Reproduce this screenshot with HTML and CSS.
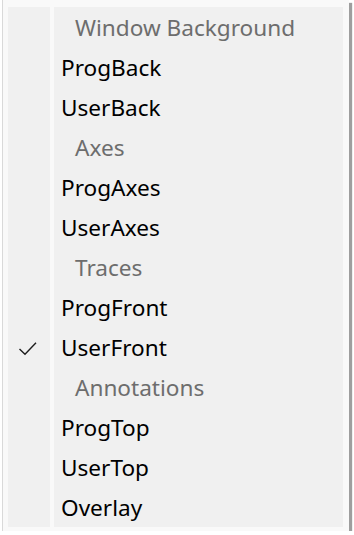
FILE: index.html
```html
<!DOCTYPE html>
<html lang="en">
<head>
  <meta charset="UTF-8">
  <meta name="viewport" content="width=device-width, initial-scale=1.0">
  <title>Layer menu</title>
  <link rel="stylesheet" href="styles.css">
</head>
<body>
  <div id="menu">
    <div class="row header"><span class="mark"></span><span class="label">Window Background</span></div>
    <div class="row"><span class="mark"></span><span class="label">ProgBack</span></div>
    <div class="row"><span class="mark"></span><span class="label">UserBack</span></div>
    <div class="row header"><span class="mark"></span><span class="label">Axes</span></div>
    <div class="row"><span class="mark"></span><span class="label">ProgAxes</span></div>
    <div class="row"><span class="mark"></span><span class="label">UserAxes</span></div>
    <div class="row header"><span class="mark"></span><span class="label">Traces</span></div>
    <div class="row"><span class="mark"></span><span class="label">ProgFront</span></div>
    <div class="row checked">
      <span class="mark">
        <svg width="42" height="40" viewBox="0 0 42 40"><polyline points="11.5,22 17,27.3 28,15.8" fill="none" stroke="#1e1e1e" stroke-width="1.4"/></svg>
      </span>
      <span class="label">UserFront</span>
    </div>
    <div class="row header"><span class="mark"></span><span class="label">Annotations</span></div>
    <div class="row"><span class="mark"></span><span class="label">ProgTop</span></div>
    <div class="row"><span class="mark"></span><span class="label">UserTop</span></div>
    <div class="row"><span class="mark"></span><span class="label">Overlay</span></div>
  </div>
</body>
</html>
```

FILE: styles.css
```css
* {
  box-sizing: border-box;
  margin: 0;
  padding: 0;
}

body {
  background-color: #ffffff;
  font-family: 'Noto Sans', 'Open Sans', sans-serif;
}

#menu {
  width: 347px;
  margin-left: 2px;
  padding: 7px 6px 4px 5px;
  background-color: #f9f9f9;
  border-left: 1px solid #d9d9d9;
  box-shadow: 3px 3px 1px rgba(0, 0, 0, 0.38);
}

.row {
  display: grid;
  grid-template-columns: 42px 1fr;
  column-gap: 4px;
  height: 40px;
}

.mark,
.label {
  background-color: #f0f0f0;
}

.mark svg {
  display: block;
}

.label {
  padding-top: 1px;
  padding-left: 7px;
  font-size: 22.6px;
  line-height: 39px;
  color: #000000;
  white-space: nowrap;
}

.header .label {
  padding-left: 21px;
  color: #6d6d6d;
}
```
